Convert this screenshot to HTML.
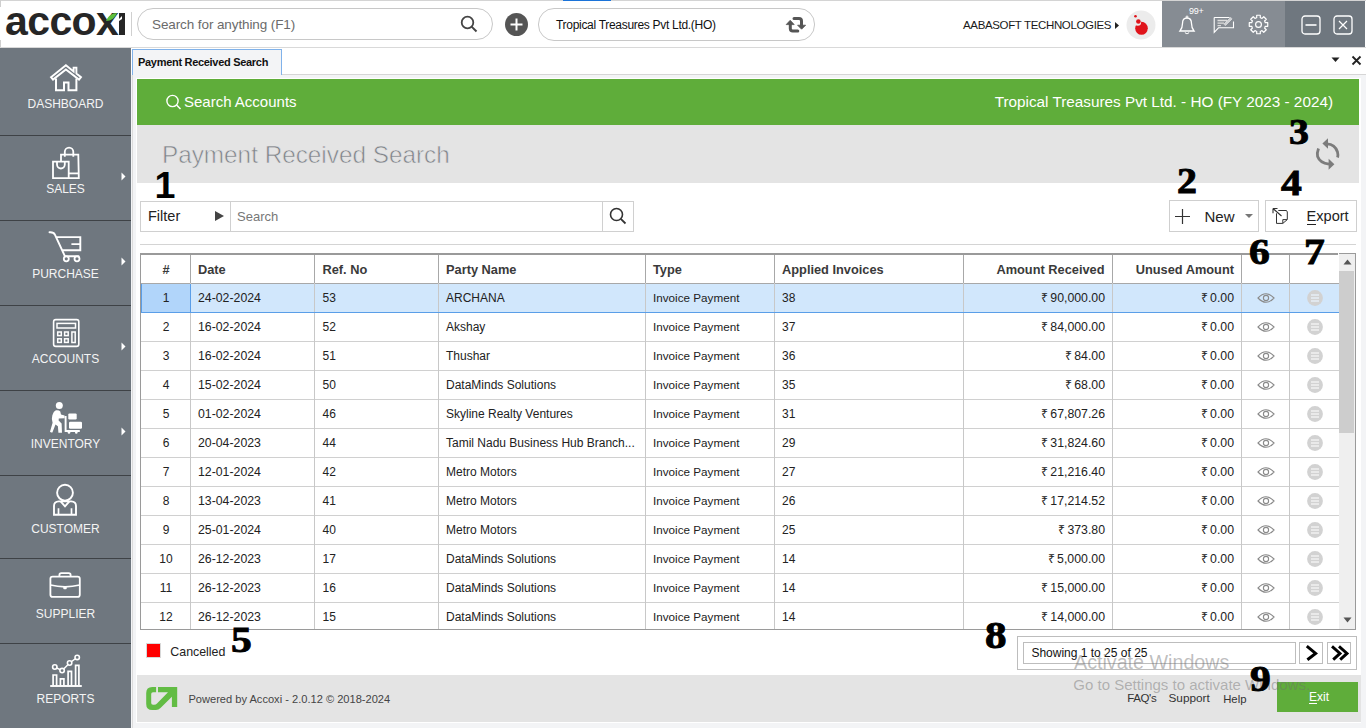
<!DOCTYPE html>
<html><head><meta charset="utf-8"><title>Payment Received Search</title>
<style>
html,body{margin:0;padding:0;}
body{width:1366px;height:728px;overflow:hidden;position:relative;font-family:"Liberation Sans",sans-serif;background:#fff;}
.b{position:absolute;display:block;}
.t{position:absolute;white-space:nowrap;line-height:1;}
</style></head><body>
<div class="b" style="left:0px;top:0px;width:1366px;height:728px;background:#fff;"></div>
<div class="b" style="left:0px;top:0px;width:1366px;height:1px;background:#d4d4d4;"></div>
<div class="b" style="left:0px;top:0px;width:1px;height:7px;background:#cfcfcf;"></div>
<div class="b" style="left:0px;top:40px;width:1px;height:8px;background:#cfcfcf;"></div>
<div class="b" style="left:563px;top:0px;width:48px;height:1px;background:#1a73d9;"></div>
<div class="b" style="left:0px;top:47px;width:1366px;height:1px;background:#d9d9d9;"></div>
<div class="t" style="left:5px;top:-3px;font-size:41px;font-weight:700;color:#262626;letter-spacing:-0.6px;line-height:48px;">accox</div>
<div class="b" style="left:119px;top:13px;width:6px;height:22px;background:#262626;"></div>
<svg class="b" style="left:117px;top:16px;" width="5" height="5" viewBox="0 0 5 5"><path d="M0 5L5 0V3L2 5Z" fill="#fff"/></svg>
<svg class="b" style="left:105px;top:12px;" width="13" height="10" viewBox="0 0 13 10"><path d="M1 9 C3 4 7 1 12 1 C10 6 6 9 1 9 Z" fill="#5cbf3c"/></svg>
<div class="b" style="left:131px;top:12px;width:1px;height:24px;background:#d0d0d0;"></div>
<div class="b" style="left:137px;top:8px;width:354px;height:30px;border:1px solid #c8c8c8;border-radius:16px;background:#fff;"></div>
<div class="t" style="top:17.57px;font-size:13.5px;color:#6b6b6b;font-weight:400;letter-spacing:-0.1px;left:152px;">Search for anything (F1)</div>
<svg class="b" style="left:460px;top:15px;" width="18" height="18" viewBox="0 0 18 18"><circle cx="7.5" cy="7.5" r="5.8" fill="none" stroke="#444" stroke-width="1.8"/><path d="M11.6 11.6 L16.5 16.5" stroke="#444" stroke-width="2"/></svg>
<svg class="b" style="left:504px;top:12px;" width="25" height="25" viewBox="0 0 25 25"><circle cx="12.5" cy="12.5" r="11.5" fill="#555"/><path d="M12.5 6.5V18.5M6.5 12.5H18.5" stroke="#fff" stroke-width="2"/></svg>
<div class="b" style="left:538px;top:8px;width:275px;height:31px;border:1px solid #c8c8c8;border-radius:16px;background:#fff;"></div>
<div class="t" style="top:18.84px;font-size:12px;color:#111;font-weight:400;letter-spacing:-0.3px;left:556px;">Tropical Treasures Pvt Ltd.(HO)</div>
<svg class="b" style="left:780px;top:10px;" width="32" height="30" viewBox="0 0 32 30"><path d="M17.8 21H12.8Q10.3 21 10.3 18.5V14" fill="none" stroke="#555" stroke-width="3" stroke-linecap="round"/><path d="M6.2 14.6L10.2 10.3L14.2 14.6Z" fill="#555" stroke="#555" stroke-width="0.8" stroke-linejoin="round"/><path d="M14 8.5H19Q21.5 8.5 21.5 11V15.5" fill="none" stroke="#555" stroke-width="3" stroke-linecap="round"/><path d="M17.6 15.2L21.6 19.2L25.6 15.2Z" fill="#555" stroke="#555" stroke-width="0.8" stroke-linejoin="round"/></svg>
<div class="t" style="top:20.27px;font-size:11.5px;color:#1a1a1a;font-weight:400;letter-spacing:-0.35px;left:963px;">AABASOFT TECHNOLOGIES</div>
<svg class="b" style="left:1114px;top:21px;" width="6" height="9" viewBox="0 0 6 9"><path d="M1 1L5 4.5L1 8Z" fill="#222"/></svg>
<svg class="b" style="left:1126px;top:10px;" width="30" height="30" viewBox="0 0 30 30"><circle cx="15" cy="15" r="14.5" fill="#ececec"/><ellipse cx="15.5" cy="18.3" rx="6.3" ry="6.5" fill="#e0141b"/><circle cx="11.8" cy="12.5" r="3.3" fill="#ececec"/><circle cx="12.4" cy="11.5" r="2.3" fill="#e0141b"/><circle cx="9.5" cy="6.2" r="1.3" fill="#e0141b"/></svg>
<div class="b" style="left:1162px;top:1px;width:123px;height:46px;background:#868c93;"></div>
<div class="b" style="left:1285px;top:1px;width:80px;height:46px;background:#6f777f;"></div>
<svg class="b" style="left:1177px;top:14px;" width="20" height="22" viewBox="0 0 20 22"><path d="M3 17 Q5.5 14 5.5 9.5 Q5.5 4 10 4 Q14.5 4 14.5 9.5 Q14.5 14 17 17 Z" fill="none" stroke="#fff" stroke-width="1.3"/><circle cx="10" cy="3" r="1" fill="none" stroke="#fff" stroke-width="1"/><path d="M8 18.5 Q10 21 12 18.5" fill="none" stroke="#fff" stroke-width="1.2"/></svg>
<div class="t" style="top:7.38px;font-size:9px;color:#fff;font-weight:400;letter-spacing:-0.3px;left:1189px;">99+</div>
<svg class="b" style="left:1213px;top:16px;" width="22" height="20" viewBox="0 0 22 20"><path d="M1.2 1.5H16.5M20.5 5.5V11.8H5.5L1.2 16.3V1.5" fill="none" stroke="#fff" stroke-width="1.1"/><path d="M4.5 4.5H14M4.5 7.2H11M4.5 9.6H8" stroke="#ddd" stroke-width="1.3"/><path d="M11.5 9L18.5 2" stroke="#fff" stroke-width="2.4"/><path d="M11.5 9L18.5 2" stroke="#868c93" stroke-width="0.8"/></svg>
<svg class="b" style="left:1248px;top:14px;" width="21" height="21" viewBox="0 0 21 21"><path d="M16.97 7.82L17.26 8.69L19.73 8.71L19.73 12.29L17.26 12.31L16.97 13.18L16.56 14.00L18.29 15.76L15.76 18.29L14.00 16.56L13.18 16.97L12.31 17.26L12.29 19.73L8.71 19.73L8.69 17.26L7.82 16.97L7.00 16.56L5.24 18.29L2.71 15.76L4.44 14.00L4.03 13.18L3.74 12.31L1.27 12.29L1.27 8.71L3.74 8.69L4.03 7.82L4.44 7.00L2.71 5.24L5.24 2.71L7.00 4.44L7.82 4.03L8.69 3.74L8.71 1.27L12.29 1.27L12.31 3.74L13.18 4.03L14.00 4.44L15.76 2.71L18.29 5.24L16.56 7.00Z" fill="none" stroke="#fff" stroke-width="1.2" stroke-linejoin="round"/><circle cx="10.5" cy="10.5" r="2.9" fill="none" stroke="#fff" stroke-width="1.2"/></svg>
<svg class="b" style="left:1301px;top:15px;" width="20" height="20" viewBox="0 0 20 20"><rect x="1" y="1" width="18" height="18" rx="3" fill="none" stroke="#fff" stroke-width="1.3"/><path d="M4.5 10H15.5" stroke="#fff" stroke-width="1.6"/></svg>
<svg class="b" style="left:1333px;top:15px;" width="20" height="20" viewBox="0 0 20 20"><rect x="1" y="1" width="18" height="18" rx="3" fill="none" stroke="#fff" stroke-width="1.3"/><path d="M6 6L14 14M14 6L6 14" stroke="#fff" stroke-width="1.2"/></svg>
<div class="b" style="left:0px;top:48px;width:131px;height:680px;background:#6f777f;"></div>
<div class="b" style="left:0px;top:135px;width:131px;height:1px;background:#3e4246;"></div>
<div class="b" style="left:0px;top:220px;width:131px;height:1px;background:#3e4246;"></div>
<div class="b" style="left:0px;top:305px;width:131px;height:1px;background:#3e4246;"></div>
<div class="b" style="left:0px;top:390px;width:131px;height:1px;background:#3e4246;"></div>
<div class="b" style="left:0px;top:475px;width:131px;height:1px;background:#3e4246;"></div>
<div class="b" style="left:0px;top:558px;width:131px;height:1px;background:#3e4246;"></div>
<div class="b" style="left:0px;top:643px;width:131px;height:1px;background:#3e4246;"></div>
<div class="t" style="top:97.84px;font-size:12px;color:#f4f4f4;font-weight:400;left:-234.5px;width:600px;text-align:center;">DASHBOARD</div>
<div class="t" style="top:182.84px;font-size:12px;color:#f4f4f4;font-weight:400;left:-234.5px;width:600px;text-align:center;">SALES</div>
<div class="t" style="top:267.54px;font-size:12px;color:#f4f4f4;font-weight:400;left:-234.5px;width:600px;text-align:center;">PURCHASE</div>
<div class="t" style="top:352.84px;font-size:12px;color:#f4f4f4;font-weight:400;left:-234.5px;width:600px;text-align:center;">ACCOUNTS</div>
<div class="t" style="top:437.54px;font-size:12px;color:#f4f4f4;font-weight:400;left:-234.5px;width:600px;text-align:center;">INVENTORY</div>
<div class="t" style="top:522.84px;font-size:12px;color:#f4f4f4;font-weight:400;left:-234.5px;width:600px;text-align:center;">CUSTOMER</div>
<div class="t" style="top:607.84px;font-size:12px;color:#f4f4f4;font-weight:400;left:-234.5px;width:600px;text-align:center;">SUPPLIER</div>
<div class="t" style="top:692.64px;font-size:12px;color:#f4f4f4;font-weight:400;left:-234.5px;width:600px;text-align:center;">REPORTS</div>
<svg class="b" style="left:121px;top:172px;" width="5" height="9" viewBox="0 0 5 9"><path d="M0.5 0.5L4.5 4.5L0.5 8.5Z" fill="#fff"/></svg>
<svg class="b" style="left:121px;top:257px;" width="5" height="9" viewBox="0 0 5 9"><path d="M0.5 0.5L4.5 4.5L0.5 8.5Z" fill="#fff"/></svg>
<svg class="b" style="left:121px;top:342px;" width="5" height="9" viewBox="0 0 5 9"><path d="M0.5 0.5L4.5 4.5L0.5 8.5Z" fill="#fff"/></svg>
<svg class="b" style="left:121px;top:427px;" width="5" height="9" viewBox="0 0 5 9"><path d="M0.5 0.5L4.5 4.5L0.5 8.5Z" fill="#fff"/></svg>
<svg class="b" style="left:45px;top:58px;" width="43" height="38" viewBox="0 0 43 38"><path d="M6 19.2L20.9 7.2L28.6 13.4V9.6H31.4V15.6L36 19.2L34 21.6L20.9 11.4L8 21.6Z" fill="none" stroke="#fff" stroke-width="1.9" stroke-linejoin="miter"/><path d="M11 20.5V32.2H19V24.6H23.5V32.2H31.4V20.5" fill="none" stroke="#fff" stroke-width="2"/></svg>
<svg class="b" style="left:45px;top:142px;" width="43" height="42" viewBox="0 0 43 42"><path d="M8 19.6H23.7V36.2H8Z" fill="none" stroke="#fff" stroke-width="1.8"/><path d="M12 19.6V22.6A3.9 3.9 0 0 0 19.8 22.6V19.6" fill="none" stroke="#fff" stroke-width="1.8"/><path d="M16 19.6V12.6H33.3L33.8 36.2H23.7" fill="none" stroke="#fff" stroke-width="1.8"/><path d="M23.7 31.4H33.6" stroke="#fff" stroke-width="1.8"/><path d="M19.8 14.8V9.8A4.25 4.25 0 0 1 28.3 9.8V14.8" fill="none" stroke="#fff" stroke-width="1.8"/></svg>
<svg class="b" style="left:44px;top:226px;" width="44" height="40" viewBox="0 0 44 40"><path d="M5.5 6.3Q9.6 6 10.9 8.6L20.9 30.2H34.6" fill="none" stroke="#fff" stroke-width="1.9" stroke-linecap="round"/><path d="M12.2 11.1H36.3V24.3H18.4M27.4 18.1H36.3" fill="none" stroke="#fff" stroke-width="1.9"/><circle cx="22.3" cy="32.8" r="2.5" fill="#6f777f" stroke="#fff" stroke-width="1.8"/><circle cx="33" cy="32.8" r="2.5" fill="#6f777f" stroke="#fff" stroke-width="1.8"/></svg>
<svg class="b" style="left:46px;top:312px;" width="40" height="40" viewBox="0 0 40 40"><rect x="7.6" y="7.6" width="25.2" height="26.8" rx="2.2" fill="none" stroke="#fff" stroke-width="1.6"/><rect x="11" y="11.4" width="18.5" height="4.6" fill="none" stroke="#fff" stroke-width="1.5"/><rect x="11.7" y="20" width="3.6" height="3.6" fill="none" stroke="#fff" stroke-width="1.5"/><rect x="18.6" y="20" width="3.6" height="3.6" fill="none" stroke="#fff" stroke-width="1.5"/><rect x="11.7" y="26.8" width="3.6" height="3.6" fill="none" stroke="#fff" stroke-width="1.5"/><rect x="18.6" y="26.8" width="3.6" height="3.6" fill="none" stroke="#fff" stroke-width="1.5"/><rect x="25.9" y="20" width="3.3" height="10.5" fill="none" stroke="#fff" stroke-width="1.5"/></svg>
<svg class="b" style="left:45px;top:398px;" width="43" height="40" viewBox="0 0 43 40"><circle cx="14.3" cy="7.4" r="3.5" fill="#fff"/><path d="M11 12.2Q14 11.8 15.3 13.6L16 16.6L19.6 17.4V20.3L13.8 20.4L13.6 22.6L16.6 25.6L17 34.8H13.4L12.9 28.2L10.5 26.4L7.4 34.4Q6 35 5 33.8L7.6 24.8Q6.2 21.6 7.3 17.6Q8.5 13.2 11 12.2Z" fill="#fff"/><path d="M20.6 18V33H34.8" fill="none" stroke="#fff" stroke-width="1.9"/><circle cx="24" cy="34.4" r="1.3" fill="#fff"/><circle cx="31.3" cy="34.4" r="1.3" fill="#fff"/><rect x="23.3" y="15.4" width="8.4" height="6.1" rx="1.2" fill="#fff"/><rect x="24" y="23.8" width="13" height="6.9" rx="1.2" fill="#fff"/></svg>
<svg class="b" style="left:45px;top:480px;" width="40" height="40" viewBox="0 0 40 40"><circle cx="20" cy="12.7" r="7.9" fill="none" stroke="#fff" stroke-width="1.9"/><path d="M9 34.8V26Q9 21.6 13.8 21.4H26.2Q31 21.6 31 26V34.8Z" fill="none" stroke="#fff" stroke-width="1.9"/><path d="M15.6 21.4L20 26.4L24.4 21.4" fill="none" stroke="#fff" stroke-width="1.9"/><path d="M13.5 28.2V34M26.5 28.2V34" stroke="#fff" stroke-width="1.7"/></svg>
<svg class="b" style="left:44px;top:565px;" width="42" height="38" viewBox="0 0 42 38"><path d="M15.4 11.2V10Q15.4 8.1 17.3 8.1H24.7Q26.6 8.1 26.6 10V11.2" fill="none" stroke="#fff" stroke-width="1.8"/><rect x="6.4" y="11.6" width="29.4" height="20.3" rx="2.2" fill="none" stroke="#fff" stroke-width="1.8"/><path d="M6.4 20Q21 23.6 35.8 20" fill="none" stroke="#fff" stroke-width="1.8"/><rect x="19.3" y="21" width="3.4" height="3.3" rx="0.8" fill="#fff"/></svg>
<svg class="b" style="left:45px;top:650px;" width="42" height="42" viewBox="0 0 42 42"><path d="M5.2 36H36.8" stroke="#fff" stroke-width="1.9"/><path d="M8.1 35.5V25H11.6V35.5M15.4 35.5V28.8H18.9V35.5M23.1 35.5V21.3H26.5V35.5M30.6 35.5V15.3H33.9V35.5" fill="none" stroke="#fff" stroke-width="1.7"/><path d="M9.8 17L17.1 20.6L24.6 13L32.2 7.4" fill="none" stroke="#fff" stroke-width="1.4"/><circle cx="9.8" cy="17" r="2.2" fill="#6f777f" stroke="#fff" stroke-width="1.6"/><circle cx="17.1" cy="20.6" r="2.2" fill="#6f777f" stroke="#fff" stroke-width="1.6"/><circle cx="24.6" cy="13" r="2.2" fill="#6f777f" stroke="#fff" stroke-width="1.6"/><circle cx="32.2" cy="7.4" r="2.2" fill="#6f777f" stroke="#fff" stroke-width="1.6"/></svg>
<div class="b" style="left:131px;top:48px;width:1235px;height:680px;background:#f3f4f6;"></div>
<div class="b" style="left:131px;top:48px;width:1235px;height:27px;background:#fff;"></div>
<div class="b" style="left:132px;top:75px;width:1px;height:653px;background:#dcdcdc;"></div>
<div class="b" style="left:282px;top:74px;width:1084px;height:1px;background:#d6d6d6;"></div>
<div class="b" style="left:132px;top:49px;width:150px;height:26px;background:#f3f4f6;border:1px solid #80b2ea;border-bottom:none;box-sizing:border-box;"></div>
<div class="t" style="top:56.69px;font-size:11px;color:#111;font-weight:700;letter-spacing:-0.3px;left:138px;">Payment Received Search</div>
<svg class="b" style="left:1331px;top:57px;" width="9" height="6" viewBox="0 0 9 6"><path d="M0.5 0.5H8.5L4.5 5Z" fill="#222"/></svg>
<svg class="b" style="left:1351px;top:55px;" width="11" height="11" viewBox="0 0 11 11"><path d="M1.5 1.5L9.5 9.5M9.5 1.5L1.5 9.5" stroke="#222" stroke-width="1.8"/></svg>
<div class="b" style="left:136px;top:78px;width:1225px;height:645px;background:#fff;"></div>
<div class="b" style="left:137px;top:79px;width:1222px;height:46px;background:#5fad3a;"></div>
<svg class="b" style="left:165px;top:94px;" width="18" height="16" viewBox="0 0 18 16"><circle cx="7.5" cy="7" r="5.6" fill="none" stroke="#fff" stroke-width="1.4"/><path d="M11.6 11L15.5 15" stroke="#fff" stroke-width="1.5"/></svg>
<div class="t" style="top:94.30px;font-size:15px;color:#fff;font-weight:400;left:184px;">Search Accounts</div>
<div class="t" style="top:94.05px;font-size:15.3px;color:#fff;font-weight:400;right:33px;text-align:right;">Tropical Treasures Pvt Ltd. - HO (FY 2023 - 2024)</div>
<div class="b" style="left:137px;top:125px;width:1222px;height:58px;background:#e4e4e4;"></div>
<div class="t" style="top:142.83px;font-size:24.3px;color:#7f8389;font-weight:400;left:162px;-webkit-text-stroke:0.6px #e4e4e4;">Payment Received Search</div>
<svg class="b" style="left:1310px;top:134px;" width="36" height="40" viewBox="0 0 36 40"><path d="M17 9.8Q25 10 27.5 18Q28.3 21 27.6 23.5" fill="none" stroke="#7c7c7c" stroke-width="2.8"/><path d="M12.4 9.4L18 4.2V14.8Z" fill="#7c7c7c"/><path d="M8.5 14.5Q6.8 19 7.6 22.5Q10 29 19 30.2" fill="none" stroke="#7c7c7c" stroke-width="2.8"/><path d="M24.4 30.2L18.6 24.8V35.7Z" fill="#7c7c7c"/></svg>
<div class="b" style="left:140px;top:201px;width:494px;height:31px;border:1px solid #d0d0d0;box-sizing:border-box;background:#fff;"></div>
<div class="b" style="left:230px;top:201px;width:1px;height:31px;background:#d0d0d0;"></div>
<div class="b" style="left:602px;top:201px;width:1px;height:31px;background:#d0d0d0;"></div>
<div class="t" style="top:209.03px;font-size:14.5px;color:#222;font-weight:400;left:148px;">Filter</div>
<svg class="b" style="left:214px;top:210px;" width="11" height="12" viewBox="0 0 11 12"><path d="M1 1L10 6L1 11Z" fill="#444"/></svg>
<div class="t" style="top:210.30px;font-size:13px;color:#777;font-weight:400;letter-spacing:0px;left:237px;">Search</div>
<svg class="b" style="left:608px;top:206px;" width="20" height="20" viewBox="0 0 20 20"><circle cx="8.5" cy="8.5" r="6" fill="none" stroke="#333" stroke-width="1.6"/><path d="M12.8 12.8L17.5 17.5" stroke="#333" stroke-width="1.8"/></svg>
<div class="b" style="left:1169px;top:200px;width:90px;height:32px;border:1px solid #cfcfcf;box-sizing:border-box;background:#fff;"></div>
<svg class="b" style="left:1174px;top:208px;" width="17" height="17" viewBox="0 0 17 17"><path d="M8.5 1V16M1 8.5H16" stroke="#333" stroke-width="1.2"/></svg>
<div class="t" style="top:208.90px;font-size:15px;color:#222;font-weight:400;left:1204.5px;">New</div>
<svg class="b" style="left:1244px;top:213px;" width="10" height="6" viewBox="0 0 10 6"><path d="M1 1H9L5 5Z" fill="#777"/></svg>
<div class="b" style="left:1265px;top:200px;width:92px;height:32px;border:1px solid #cfcfcf;box-sizing:border-box;background:#fff;"></div>
<svg class="b" style="left:1266px;top:202px;" width="30" height="28" viewBox="0 0 30 28"><path d="M12.3 8.5H20.5L21.3 10V17.6L16.8 21.4H10.5V11.3M16.8 21.4V17.6H21" fill="none" stroke="#333" stroke-width="1"/><path d="M7 6.5L15.5 14M7 6.5H11.5M7 6.5V11.3" fill="none" stroke="#333" stroke-width="1.1"/></svg>
<div class="t" style="top:209.24px;font-size:14.6px;color:#222;font-weight:400;left:1306.5px;">Export</div>
<div class="b" style="left:1307px;top:224px;width:9px;height:1px;background:#222;"></div>
<div class="b" style="left:140px;top:244px;width:1216px;height:1px;background:#d4d4d4;"></div>
<div class="b" style="left:140px;top:253px;width:1216px;height:377px;border:1px solid #9a9a9a;border-top:2px solid #9a9a9a;box-sizing:border-box;background:#fff;"></div>
<div class="b" style="left:141px;top:283px;width:1198px;height:1px;background:#a8a8a8;"></div>
<div class="b" style="left:141px;top:284px;width:1198px;height:28px;background:#d1e7fc;"></div>
<div class="b" style="left:141px;top:284px;width:49px;height:28px;background:#b1d5fa;"></div>
<div class="b" style="left:141px;top:341px;width:1198px;height:1px;background:#d0d0d0;"></div>
<div class="b" style="left:141px;top:370px;width:1198px;height:1px;background:#d0d0d0;"></div>
<div class="b" style="left:141px;top:399px;width:1198px;height:1px;background:#d0d0d0;"></div>
<div class="b" style="left:141px;top:428px;width:1198px;height:1px;background:#d0d0d0;"></div>
<div class="b" style="left:141px;top:457px;width:1198px;height:1px;background:#d0d0d0;"></div>
<div class="b" style="left:141px;top:486px;width:1198px;height:1px;background:#d0d0d0;"></div>
<div class="b" style="left:141px;top:515px;width:1198px;height:1px;background:#d0d0d0;"></div>
<div class="b" style="left:141px;top:544px;width:1198px;height:1px;background:#d0d0d0;"></div>
<div class="b" style="left:141px;top:573px;width:1198px;height:1px;background:#d0d0d0;"></div>
<div class="b" style="left:141px;top:602px;width:1198px;height:1px;background:#d0d0d0;"></div>
<div class="b" style="left:190px;top:255px;width:1px;height:374px;background:#c8c8c8;"></div>
<div class="b" style="left:314px;top:255px;width:1px;height:374px;background:#c8c8c8;"></div>
<div class="b" style="left:438px;top:255px;width:1px;height:374px;background:#c8c8c8;"></div>
<div class="b" style="left:645px;top:255px;width:1px;height:374px;background:#c8c8c8;"></div>
<div class="b" style="left:774px;top:255px;width:1px;height:374px;background:#c8c8c8;"></div>
<div class="b" style="left:963px;top:255px;width:1px;height:374px;background:#c8c8c8;"></div>
<div class="b" style="left:1112px;top:255px;width:1px;height:374px;background:#c8c8c8;"></div>
<div class="b" style="left:1241px;top:255px;width:1px;height:374px;background:#c8c8c8;"></div>
<div class="b" style="left:1289px;top:255px;width:1px;height:374px;background:#c8c8c8;"></div>
<div class="b" style="left:190px;top:255px;width:1px;height:28px;background:#a8a8a8;"></div>
<div class="b" style="left:314px;top:255px;width:1px;height:28px;background:#a8a8a8;"></div>
<div class="b" style="left:438px;top:255px;width:1px;height:28px;background:#a8a8a8;"></div>
<div class="b" style="left:645px;top:255px;width:1px;height:28px;background:#a8a8a8;"></div>
<div class="b" style="left:774px;top:255px;width:1px;height:28px;background:#a8a8a8;"></div>
<div class="b" style="left:963px;top:255px;width:1px;height:28px;background:#a8a8a8;"></div>
<div class="b" style="left:1112px;top:255px;width:1px;height:28px;background:#a8a8a8;"></div>
<div class="b" style="left:1241px;top:255px;width:1px;height:28px;background:#a8a8a8;"></div>
<div class="b" style="left:1289px;top:255px;width:1px;height:28px;background:#a8a8a8;"></div>
<div class="b" style="left:141px;top:312px;width:1198px;height:1px;background:#5a9ee8;"></div>
<div class="b" style="left:141px;top:284px;width:1px;height:29px;background:#5a9ee8;"></div>
<div class="b" style="left:190px;top:284px;width:1px;height:29px;background:#5a9ee8;"></div>
<div class="b" style="left:1339px;top:254px;width:16px;height:375px;background:#efefef;"></div>
<div class="b" style="left:1339px;top:271px;width:15px;height:162px;background:#cdcdcd;"></div>
<svg class="b" style="left:1343px;top:259px;" width="9" height="6" viewBox="0 0 9 6"><path d="M0.5 5.5H8.5L4.5 0.5Z" fill="#555"/></svg>
<svg class="b" style="left:1343px;top:617px;" width="9" height="6" viewBox="0 0 9 6"><path d="M0.5 0.5H8.5L4.5 5.5Z" fill="#555"/></svg>
<div class="b" style="left:1338px;top:253px;width:1px;height:2px;background:#fff;"></div>
<div class="b" style="left:1339px;top:253px;width:16px;height:1px;background:#9a9a9a;"></div>
<div class="t" style="top:264.36px;font-size:12.8px;color:#3a3a3a;font-weight:700;left:-134px;width:600px;text-align:center;">#</div>
<div class="t" style="top:264.36px;font-size:12.8px;color:#3a3a3a;font-weight:700;left:198px;">Date</div>
<div class="t" style="top:264.36px;font-size:12.8px;color:#3a3a3a;font-weight:700;left:322.5px;">Ref. No</div>
<div class="t" style="top:264.36px;font-size:12.8px;color:#3a3a3a;font-weight:700;left:446px;">Party Name</div>
<div class="t" style="top:264.36px;font-size:12.8px;color:#3a3a3a;font-weight:700;left:653px;">Type</div>
<div class="t" style="top:264.36px;font-size:12.8px;color:#3a3a3a;font-weight:700;left:782px;">Applied Invoices</div>
<div class="t" style="top:264.36px;font-size:12.8px;color:#3a3a3a;font-weight:700;right:261.5px;text-align:right;">Amount Received</div>
<div class="t" style="top:264.36px;font-size:12.8px;color:#3a3a3a;font-weight:700;right:132px;text-align:right;">Unused Amount</div>
<div class="t" style="top:291.84px;font-size:12px;color:#222;font-weight:400;left:-134px;width:600px;text-align:center;">1</div>
<div class="t" style="top:291.59px;font-size:12.3px;color:#222;font-weight:400;left:198px;">24-02-2024</div>
<div class="t" style="top:291.84px;font-size:12px;color:#222;font-weight:400;left:322.5px;">53</div>
<div class="t" style="top:291.84px;font-size:12px;color:#222;font-weight:400;left:446px;">ARCHANA</div>
<div class="t" style="top:292.10px;font-size:11.7px;color:#222;font-weight:400;left:653px;">Invoice Payment</div>
<div class="t" style="top:291.84px;font-size:12px;color:#222;font-weight:400;left:782px;">38</div>
<div class="t" style="top:291.59px;font-size:12.3px;color:#222;font-weight:400;right:261px;text-align:right;">₹&#8201;90,000.00</div>
<div class="t" style="top:291.59px;font-size:12.3px;color:#222;font-weight:400;right:132px;text-align:right;">₹&#8201;0.00</div>
<svg class="b" style="left:1257px;top:292px;" width="18" height="12" viewBox="0 0 18 12"><path d="M1 6Q9 -2.5 17 6Q9 14.5 1 6Z" fill="none" stroke="#8a8a8a" stroke-width="1.1"/><circle cx="9" cy="6" r="2.6" fill="none" stroke="#8a8a8a" stroke-width="1.1"/></svg>
<svg class="b" style="left:1307px;top:290px;" width="16" height="16" viewBox="0 0 16 16"><circle cx="8" cy="8" r="7.9" fill="#d2d2d2"/><path d="M4 5H12M4 8H12M4 11H12" stroke="#e6eef6" stroke-width="1.6"/></svg>
<div class="t" style="top:320.84px;font-size:12px;color:#222;font-weight:400;left:-134px;width:600px;text-align:center;">2</div>
<div class="t" style="top:320.59px;font-size:12.3px;color:#222;font-weight:400;left:198px;">16-02-2024</div>
<div class="t" style="top:320.84px;font-size:12px;color:#222;font-weight:400;left:322.5px;">52</div>
<div class="t" style="top:320.84px;font-size:12px;color:#222;font-weight:400;left:446px;">Akshay</div>
<div class="t" style="top:321.10px;font-size:11.7px;color:#222;font-weight:400;left:653px;">Invoice Payment</div>
<div class="t" style="top:320.84px;font-size:12px;color:#222;font-weight:400;left:782px;">37</div>
<div class="t" style="top:320.59px;font-size:12.3px;color:#222;font-weight:400;right:261px;text-align:right;">₹&#8201;84,000.00</div>
<div class="t" style="top:320.59px;font-size:12.3px;color:#222;font-weight:400;right:132px;text-align:right;">₹&#8201;0.00</div>
<svg class="b" style="left:1257px;top:321px;" width="18" height="12" viewBox="0 0 18 12"><path d="M1 6Q9 -2.5 17 6Q9 14.5 1 6Z" fill="none" stroke="#8a8a8a" stroke-width="1.1"/><circle cx="9" cy="6" r="2.6" fill="none" stroke="#8a8a8a" stroke-width="1.1"/></svg>
<svg class="b" style="left:1307px;top:319px;" width="16" height="16" viewBox="0 0 16 16"><circle cx="8" cy="8" r="7.9" fill="#d2d2d2"/><path d="M4 5H12M4 8H12M4 11H12" stroke="#f1f1f1" stroke-width="1.6"/></svg>
<div class="t" style="top:349.84px;font-size:12px;color:#222;font-weight:400;left:-134px;width:600px;text-align:center;">3</div>
<div class="t" style="top:349.59px;font-size:12.3px;color:#222;font-weight:400;left:198px;">16-02-2024</div>
<div class="t" style="top:349.84px;font-size:12px;color:#222;font-weight:400;left:322.5px;">51</div>
<div class="t" style="top:349.84px;font-size:12px;color:#222;font-weight:400;left:446px;">Thushar</div>
<div class="t" style="top:350.10px;font-size:11.7px;color:#222;font-weight:400;left:653px;">Invoice Payment</div>
<div class="t" style="top:349.84px;font-size:12px;color:#222;font-weight:400;left:782px;">36</div>
<div class="t" style="top:349.59px;font-size:12.3px;color:#222;font-weight:400;right:261px;text-align:right;">₹&#8201;84.00</div>
<div class="t" style="top:349.59px;font-size:12.3px;color:#222;font-weight:400;right:132px;text-align:right;">₹&#8201;0.00</div>
<svg class="b" style="left:1257px;top:350px;" width="18" height="12" viewBox="0 0 18 12"><path d="M1 6Q9 -2.5 17 6Q9 14.5 1 6Z" fill="none" stroke="#8a8a8a" stroke-width="1.1"/><circle cx="9" cy="6" r="2.6" fill="none" stroke="#8a8a8a" stroke-width="1.1"/></svg>
<svg class="b" style="left:1307px;top:348px;" width="16" height="16" viewBox="0 0 16 16"><circle cx="8" cy="8" r="7.9" fill="#d2d2d2"/><path d="M4 5H12M4 8H12M4 11H12" stroke="#f1f1f1" stroke-width="1.6"/></svg>
<div class="t" style="top:378.84px;font-size:12px;color:#222;font-weight:400;left:-134px;width:600px;text-align:center;">4</div>
<div class="t" style="top:378.59px;font-size:12.3px;color:#222;font-weight:400;left:198px;">15-02-2024</div>
<div class="t" style="top:378.84px;font-size:12px;color:#222;font-weight:400;left:322.5px;">50</div>
<div class="t" style="top:378.84px;font-size:12px;color:#222;font-weight:400;left:446px;">DataMinds Solutions</div>
<div class="t" style="top:379.10px;font-size:11.7px;color:#222;font-weight:400;left:653px;">Invoice Payment</div>
<div class="t" style="top:378.84px;font-size:12px;color:#222;font-weight:400;left:782px;">35</div>
<div class="t" style="top:378.59px;font-size:12.3px;color:#222;font-weight:400;right:261px;text-align:right;">₹&#8201;68.00</div>
<div class="t" style="top:378.59px;font-size:12.3px;color:#222;font-weight:400;right:132px;text-align:right;">₹&#8201;0.00</div>
<svg class="b" style="left:1257px;top:379px;" width="18" height="12" viewBox="0 0 18 12"><path d="M1 6Q9 -2.5 17 6Q9 14.5 1 6Z" fill="none" stroke="#8a8a8a" stroke-width="1.1"/><circle cx="9" cy="6" r="2.6" fill="none" stroke="#8a8a8a" stroke-width="1.1"/></svg>
<svg class="b" style="left:1307px;top:377px;" width="16" height="16" viewBox="0 0 16 16"><circle cx="8" cy="8" r="7.9" fill="#d2d2d2"/><path d="M4 5H12M4 8H12M4 11H12" stroke="#f1f1f1" stroke-width="1.6"/></svg>
<div class="t" style="top:407.84px;font-size:12px;color:#222;font-weight:400;left:-134px;width:600px;text-align:center;">5</div>
<div class="t" style="top:407.59px;font-size:12.3px;color:#222;font-weight:400;left:198px;">01-02-2024</div>
<div class="t" style="top:407.84px;font-size:12px;color:#222;font-weight:400;left:322.5px;">46</div>
<div class="t" style="top:407.84px;font-size:12px;color:#222;font-weight:400;left:446px;">Skyline Realty Ventures</div>
<div class="t" style="top:408.10px;font-size:11.7px;color:#222;font-weight:400;left:653px;">Invoice Payment</div>
<div class="t" style="top:407.84px;font-size:12px;color:#222;font-weight:400;left:782px;">31</div>
<div class="t" style="top:407.59px;font-size:12.3px;color:#222;font-weight:400;right:261px;text-align:right;">₹&#8201;67,807.26</div>
<div class="t" style="top:407.59px;font-size:12.3px;color:#222;font-weight:400;right:132px;text-align:right;">₹&#8201;0.00</div>
<svg class="b" style="left:1257px;top:408px;" width="18" height="12" viewBox="0 0 18 12"><path d="M1 6Q9 -2.5 17 6Q9 14.5 1 6Z" fill="none" stroke="#8a8a8a" stroke-width="1.1"/><circle cx="9" cy="6" r="2.6" fill="none" stroke="#8a8a8a" stroke-width="1.1"/></svg>
<svg class="b" style="left:1307px;top:406px;" width="16" height="16" viewBox="0 0 16 16"><circle cx="8" cy="8" r="7.9" fill="#d2d2d2"/><path d="M4 5H12M4 8H12M4 11H12" stroke="#f1f1f1" stroke-width="1.6"/></svg>
<div class="t" style="top:436.84px;font-size:12px;color:#222;font-weight:400;left:-134px;width:600px;text-align:center;">6</div>
<div class="t" style="top:436.59px;font-size:12.3px;color:#222;font-weight:400;left:198px;">20-04-2023</div>
<div class="t" style="top:436.84px;font-size:12px;color:#222;font-weight:400;left:322.5px;">44</div>
<div class="t" style="top:436.84px;font-size:12px;color:#222;font-weight:400;left:446px;">Tamil Nadu Business Hub Branch...</div>
<div class="t" style="top:437.10px;font-size:11.7px;color:#222;font-weight:400;left:653px;">Invoice Payment</div>
<div class="t" style="top:436.84px;font-size:12px;color:#222;font-weight:400;left:782px;">29</div>
<div class="t" style="top:436.59px;font-size:12.3px;color:#222;font-weight:400;right:261px;text-align:right;">₹&#8201;31,824.60</div>
<div class="t" style="top:436.59px;font-size:12.3px;color:#222;font-weight:400;right:132px;text-align:right;">₹&#8201;0.00</div>
<svg class="b" style="left:1257px;top:437px;" width="18" height="12" viewBox="0 0 18 12"><path d="M1 6Q9 -2.5 17 6Q9 14.5 1 6Z" fill="none" stroke="#8a8a8a" stroke-width="1.1"/><circle cx="9" cy="6" r="2.6" fill="none" stroke="#8a8a8a" stroke-width="1.1"/></svg>
<svg class="b" style="left:1307px;top:435px;" width="16" height="16" viewBox="0 0 16 16"><circle cx="8" cy="8" r="7.9" fill="#d2d2d2"/><path d="M4 5H12M4 8H12M4 11H12" stroke="#f1f1f1" stroke-width="1.6"/></svg>
<div class="t" style="top:465.84px;font-size:12px;color:#222;font-weight:400;left:-134px;width:600px;text-align:center;">7</div>
<div class="t" style="top:465.59px;font-size:12.3px;color:#222;font-weight:400;left:198px;">12-01-2024</div>
<div class="t" style="top:465.84px;font-size:12px;color:#222;font-weight:400;left:322.5px;">42</div>
<div class="t" style="top:465.84px;font-size:12px;color:#222;font-weight:400;left:446px;">Metro Motors</div>
<div class="t" style="top:466.10px;font-size:11.7px;color:#222;font-weight:400;left:653px;">Invoice Payment</div>
<div class="t" style="top:465.84px;font-size:12px;color:#222;font-weight:400;left:782px;">27</div>
<div class="t" style="top:465.59px;font-size:12.3px;color:#222;font-weight:400;right:261px;text-align:right;">₹&#8201;21,216.40</div>
<div class="t" style="top:465.59px;font-size:12.3px;color:#222;font-weight:400;right:132px;text-align:right;">₹&#8201;0.00</div>
<svg class="b" style="left:1257px;top:466px;" width="18" height="12" viewBox="0 0 18 12"><path d="M1 6Q9 -2.5 17 6Q9 14.5 1 6Z" fill="none" stroke="#8a8a8a" stroke-width="1.1"/><circle cx="9" cy="6" r="2.6" fill="none" stroke="#8a8a8a" stroke-width="1.1"/></svg>
<svg class="b" style="left:1307px;top:464px;" width="16" height="16" viewBox="0 0 16 16"><circle cx="8" cy="8" r="7.9" fill="#d2d2d2"/><path d="M4 5H12M4 8H12M4 11H12" stroke="#f1f1f1" stroke-width="1.6"/></svg>
<div class="t" style="top:494.84px;font-size:12px;color:#222;font-weight:400;left:-134px;width:600px;text-align:center;">8</div>
<div class="t" style="top:494.59px;font-size:12.3px;color:#222;font-weight:400;left:198px;">13-04-2023</div>
<div class="t" style="top:494.84px;font-size:12px;color:#222;font-weight:400;left:322.5px;">41</div>
<div class="t" style="top:494.84px;font-size:12px;color:#222;font-weight:400;left:446px;">Metro Motors</div>
<div class="t" style="top:495.10px;font-size:11.7px;color:#222;font-weight:400;left:653px;">Invoice Payment</div>
<div class="t" style="top:494.84px;font-size:12px;color:#222;font-weight:400;left:782px;">26</div>
<div class="t" style="top:494.59px;font-size:12.3px;color:#222;font-weight:400;right:261px;text-align:right;">₹&#8201;17,214.52</div>
<div class="t" style="top:494.59px;font-size:12.3px;color:#222;font-weight:400;right:132px;text-align:right;">₹&#8201;0.00</div>
<svg class="b" style="left:1257px;top:495px;" width="18" height="12" viewBox="0 0 18 12"><path d="M1 6Q9 -2.5 17 6Q9 14.5 1 6Z" fill="none" stroke="#8a8a8a" stroke-width="1.1"/><circle cx="9" cy="6" r="2.6" fill="none" stroke="#8a8a8a" stroke-width="1.1"/></svg>
<svg class="b" style="left:1307px;top:493px;" width="16" height="16" viewBox="0 0 16 16"><circle cx="8" cy="8" r="7.9" fill="#d2d2d2"/><path d="M4 5H12M4 8H12M4 11H12" stroke="#f1f1f1" stroke-width="1.6"/></svg>
<div class="t" style="top:523.84px;font-size:12px;color:#222;font-weight:400;left:-134px;width:600px;text-align:center;">9</div>
<div class="t" style="top:523.59px;font-size:12.3px;color:#222;font-weight:400;left:198px;">25-01-2024</div>
<div class="t" style="top:523.84px;font-size:12px;color:#222;font-weight:400;left:322.5px;">40</div>
<div class="t" style="top:523.84px;font-size:12px;color:#222;font-weight:400;left:446px;">Metro Motors</div>
<div class="t" style="top:524.10px;font-size:11.7px;color:#222;font-weight:400;left:653px;">Invoice Payment</div>
<div class="t" style="top:523.84px;font-size:12px;color:#222;font-weight:400;left:782px;">25</div>
<div class="t" style="top:523.59px;font-size:12.3px;color:#222;font-weight:400;right:261px;text-align:right;">₹&#8201;373.80</div>
<div class="t" style="top:523.59px;font-size:12.3px;color:#222;font-weight:400;right:132px;text-align:right;">₹&#8201;0.00</div>
<svg class="b" style="left:1257px;top:524px;" width="18" height="12" viewBox="0 0 18 12"><path d="M1 6Q9 -2.5 17 6Q9 14.5 1 6Z" fill="none" stroke="#8a8a8a" stroke-width="1.1"/><circle cx="9" cy="6" r="2.6" fill="none" stroke="#8a8a8a" stroke-width="1.1"/></svg>
<svg class="b" style="left:1307px;top:522px;" width="16" height="16" viewBox="0 0 16 16"><circle cx="8" cy="8" r="7.9" fill="#d2d2d2"/><path d="M4 5H12M4 8H12M4 11H12" stroke="#f1f1f1" stroke-width="1.6"/></svg>
<div class="t" style="top:552.84px;font-size:12px;color:#222;font-weight:400;left:-134px;width:600px;text-align:center;">10</div>
<div class="t" style="top:552.59px;font-size:12.3px;color:#222;font-weight:400;left:198px;">26-12-2023</div>
<div class="t" style="top:552.84px;font-size:12px;color:#222;font-weight:400;left:322.5px;">17</div>
<div class="t" style="top:552.84px;font-size:12px;color:#222;font-weight:400;left:446px;">DataMinds Solutions</div>
<div class="t" style="top:553.10px;font-size:11.7px;color:#222;font-weight:400;left:653px;">Invoice Payment</div>
<div class="t" style="top:552.84px;font-size:12px;color:#222;font-weight:400;left:782px;">14</div>
<div class="t" style="top:552.59px;font-size:12.3px;color:#222;font-weight:400;right:261px;text-align:right;">₹&#8201;5,000.00</div>
<div class="t" style="top:552.59px;font-size:12.3px;color:#222;font-weight:400;right:132px;text-align:right;">₹&#8201;0.00</div>
<svg class="b" style="left:1257px;top:553px;" width="18" height="12" viewBox="0 0 18 12"><path d="M1 6Q9 -2.5 17 6Q9 14.5 1 6Z" fill="none" stroke="#8a8a8a" stroke-width="1.1"/><circle cx="9" cy="6" r="2.6" fill="none" stroke="#8a8a8a" stroke-width="1.1"/></svg>
<svg class="b" style="left:1307px;top:551px;" width="16" height="16" viewBox="0 0 16 16"><circle cx="8" cy="8" r="7.9" fill="#d2d2d2"/><path d="M4 5H12M4 8H12M4 11H12" stroke="#f1f1f1" stroke-width="1.6"/></svg>
<div class="t" style="top:581.84px;font-size:12px;color:#222;font-weight:400;left:-134px;width:600px;text-align:center;">11</div>
<div class="t" style="top:581.59px;font-size:12.3px;color:#222;font-weight:400;left:198px;">26-12-2023</div>
<div class="t" style="top:581.84px;font-size:12px;color:#222;font-weight:400;left:322.5px;">16</div>
<div class="t" style="top:581.84px;font-size:12px;color:#222;font-weight:400;left:446px;">DataMinds Solutions</div>
<div class="t" style="top:582.10px;font-size:11.7px;color:#222;font-weight:400;left:653px;">Invoice Payment</div>
<div class="t" style="top:581.84px;font-size:12px;color:#222;font-weight:400;left:782px;">14</div>
<div class="t" style="top:581.59px;font-size:12.3px;color:#222;font-weight:400;right:261px;text-align:right;">₹&#8201;15,000.00</div>
<div class="t" style="top:581.59px;font-size:12.3px;color:#222;font-weight:400;right:132px;text-align:right;">₹&#8201;0.00</div>
<svg class="b" style="left:1257px;top:582px;" width="18" height="12" viewBox="0 0 18 12"><path d="M1 6Q9 -2.5 17 6Q9 14.5 1 6Z" fill="none" stroke="#8a8a8a" stroke-width="1.1"/><circle cx="9" cy="6" r="2.6" fill="none" stroke="#8a8a8a" stroke-width="1.1"/></svg>
<svg class="b" style="left:1307px;top:580px;" width="16" height="16" viewBox="0 0 16 16"><circle cx="8" cy="8" r="7.9" fill="#d2d2d2"/><path d="M4 5H12M4 8H12M4 11H12" stroke="#f1f1f1" stroke-width="1.6"/></svg>
<div class="t" style="top:610.84px;font-size:12px;color:#222;font-weight:400;left:-134px;width:600px;text-align:center;">12</div>
<div class="t" style="top:610.59px;font-size:12.3px;color:#222;font-weight:400;left:198px;">26-12-2023</div>
<div class="t" style="top:610.84px;font-size:12px;color:#222;font-weight:400;left:322.5px;">15</div>
<div class="t" style="top:610.84px;font-size:12px;color:#222;font-weight:400;left:446px;">DataMinds Solutions</div>
<div class="t" style="top:611.10px;font-size:11.7px;color:#222;font-weight:400;left:653px;">Invoice Payment</div>
<div class="t" style="top:610.84px;font-size:12px;color:#222;font-weight:400;left:782px;">14</div>
<div class="t" style="top:610.59px;font-size:12.3px;color:#222;font-weight:400;right:261px;text-align:right;">₹&#8201;14,000.00</div>
<div class="t" style="top:610.59px;font-size:12.3px;color:#222;font-weight:400;right:132px;text-align:right;">₹&#8201;0.00</div>
<svg class="b" style="left:1257px;top:611px;" width="18" height="12" viewBox="0 0 18 12"><path d="M1 6Q9 -2.5 17 6Q9 14.5 1 6Z" fill="none" stroke="#8a8a8a" stroke-width="1.1"/><circle cx="9" cy="6" r="2.6" fill="none" stroke="#8a8a8a" stroke-width="1.1"/></svg>
<svg class="b" style="left:1307px;top:609px;" width="16" height="16" viewBox="0 0 16 16"><circle cx="8" cy="8" r="7.9" fill="#d2d2d2"/><path d="M4 5H12M4 8H12M4 11H12" stroke="#f1f1f1" stroke-width="1.6"/></svg>
<div class="b" style="left:140px;top:629px;width:1216px;height:1px;background:#9a9a9a;"></div>
<div class="b" style="left:146px;top:643px;width:15px;height:15px;background:#f00;border:1px solid #d8d8d8;box-sizing:border-box;"></div>
<div class="t" style="top:645.50px;font-size:12.4px;color:#222;font-weight:400;left:170.3px;">Cancelled</div>
<div class="b" style="left:1017px;top:636px;width:340px;height:34px;border:1px solid #bdbdbd;box-sizing:border-box;background:#fff;"></div>
<div class="b" style="left:1023px;top:642px;width:273px;height:22px;border:1px solid #bdbdbd;box-sizing:border-box;"></div>
<div class="t" style="top:647.44px;font-size:12px;color:#111;font-weight:400;left:1031.4px;">Showing 1 to 25 of 25</div>
<div class="b" style="left:1299px;top:642px;width:24px;height:22px;border:1px solid #bdbdbd;box-sizing:border-box;"></div>
<svg class="b" style="left:1300px;top:640px;" width="24" height="26" viewBox="0 0 24 26"><path d="M6.8 6.2L15.6 13.4L7.4 19.8" fill="none" stroke="#000" stroke-width="3"/></svg>
<div class="b" style="left:1327px;top:642px;width:24px;height:22px;border:1px solid #bdbdbd;box-sizing:border-box;"></div>
<svg class="b" style="left:1326px;top:640px;" width="26" height="26" viewBox="0 0 26 26"><path d="M6 6.4L14 13.4L7.2 19.6M13 6.4L21 13.4L14.2 19.6" fill="none" stroke="#000" stroke-width="2.9"/></svg>
<div class="b" style="left:137px;top:675px;width:1224px;height:47px;background:#e4e4e4;"></div>
<svg class="b" style="left:142px;top:682px;" width="40" height="32" viewBox="0 0 40 32"><path d="M14.1 5H10.2Q4.2 5 4.2 11V22Q4.2 28 10.2 28H14Q16.5 28 18.5 26L29.9 14.7V25H35.2V5H16V10.3H26L15 21.5Q14 22.8 12 22.8H11Q9.2 22.8 9.2 21V12Q9.2 10.3 11 10.3H14.1Z" fill="#62bc44"/></svg>
<div class="t" style="top:693.60px;font-size:11.1px;color:#444;font-weight:400;left:188.4px;">Powered by Accoxi - 2.0.12 © 2018-2024</div>
<div class="t" style="top:693.47px;font-size:11.5px;color:#333;font-weight:400;letter-spacing:-0.4px;left:1127.3px;">FAQ's</div>
<div class="t" style="top:693.21px;font-size:11.8px;color:#333;font-weight:400;left:1168.5px;">Support</div>
<div class="t" style="top:693.63px;font-size:11.3px;color:#333;font-weight:400;left:1223.2px;">Help</div>
<div class="b" style="left:1277px;top:682px;width:81px;height:30px;background:#5fad3a;"></div>
<div class="t" style="top:690.84px;font-size:12px;color:#fff;font-weight:400;left:1309px;">Exit</div>
<div class="b" style="left:1309px;top:703px;width:8px;height:1px;background:#fff;"></div>
<div class="t" style="top:653.32px;font-size:19.7px;color:rgba(110,110,110,0.45);font-weight:400;left:1074px;">Activate Windows</div>
<div class="t" style="top:676.90px;font-size:15px;color:rgba(110,110,110,0.45);font-weight:400;left:1073.3px;">Go to Settings to activate Windows.</div>
<div class="t" style="top:167.09px;font-size:37.7px;color:#000;font-weight:700;left:154.5px;">1</div>
<div class="t" style="top:164.12px;font-size:35.3px;color:#000;font-weight:700;font-family:'Liberation Serif',serif;left:1177px;-webkit-text-stroke:0.9px #000;transform:scaleX(1.13);transform-origin:0 0;">2</div>
<div class="t" style="top:115.12px;font-size:35.3px;color:#000;font-weight:700;font-family:'Liberation Serif',serif;left:1288.5px;-webkit-text-stroke:0.9px #000;transform:scaleX(1.13);transform-origin:0 0;">3</div>
<div class="t" style="top:164.85px;font-size:36.8px;color:#000;font-weight:700;font-family:'Liberation Serif',serif;left:1281px;-webkit-text-stroke:0.9px #000;transform:scaleX(1.13);transform-origin:0 0;">4</div>
<div class="t" style="top:621.85px;font-size:36.8px;color:#000;font-weight:700;font-family:'Liberation Serif',serif;left:230.5px;-webkit-text-stroke:0.9px #000;transform:scaleX(1.13);transform-origin:0 0;">5</div>
<div class="t" style="top:233.85px;font-size:36.8px;color:#000;font-weight:700;font-family:'Liberation Serif',serif;left:1248.5px;-webkit-text-stroke:0.9px #000;transform:scaleX(1.13);transform-origin:0 0;">6</div>
<div class="t" style="top:233.85px;font-size:36.8px;color:#000;font-weight:700;font-family:'Liberation Serif',serif;left:1304px;-webkit-text-stroke:0.9px #000;transform:scaleX(1.13);transform-origin:0 0;">7</div>
<div class="t" style="top:615.66px;font-size:38.2px;color:#000;font-weight:700;font-family:'Liberation Serif',serif;left:985px;-webkit-text-stroke:0.9px #000;transform:scaleX(1.13);transform-origin:0 0;">8</div>
<div class="t" style="top:660.85px;font-size:36.8px;color:#000;font-weight:700;font-family:'Liberation Serif',serif;left:1250px;-webkit-text-stroke:0.9px #000;transform:scaleX(1.13);transform-origin:0 0;">9</div>
</body></html>
